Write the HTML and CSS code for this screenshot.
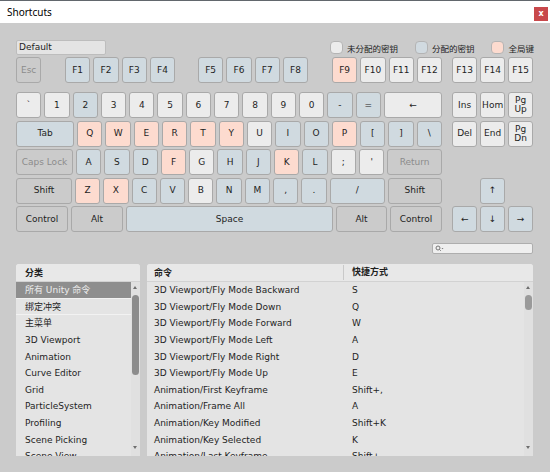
FILE: index.html
```html
<!DOCTYPE html>
<html lang="zh-CN">
<head>
    <meta charset="UTF-8">
    <title>Shortcuts</title>
    <link rel="stylesheet" href="styles.css">
</head>
<body>
<div class="window">
    <div class="titlebar">
        <span class="title">Shortcuts</span>
        <span class="close">x</span>
    </div>

    <div class="content">
        <div class="toolbar">
            <div class="profile">Default</div>
            <div class="legend">
                <span class="swatch"></span><span class="legend-text">未分配的密钥</span>
                <span class="swatch assigned"></span><span class="legend-text">分配的密钥</span>
                <span class="swatch global"></span><span class="legend-text">全局键</span>
            </div>
        </div>

        <!-- function keys -->
        <div class="row row-f">
            <div class="main">
                <div class="key off">Esc</div>
                <div class="key blue g1">F1</div>
                <div class="key blue">F2</div>
                <div class="key blue">F3</div>
                <div class="key blue">F4</div>
                <div class="key blue g2">F5</div>
                <div class="key blue">F6</div>
                <div class="key blue">F7</div>
                <div class="key blue">F8</div>
                <div class="key peach g3">F9</div>
                <div class="key">F10</div>
                <div class="key">F11</div>
                <div class="key">F12</div>
            </div>
            <div class="nav">
                <div class="key">F13</div>
                <div class="key">F14</div>
                <div class="key">F15</div>
            </div>
        </div>

        <div class="row row-first">
            <div class="main">
                <div class="key">`</div>
                <div class="key">1</div>
                <div class="key blue">2</div>
                <div class="key">3</div>
                <div class="key">4</div>
                <div class="key">5</div>
                <div class="key">6</div>
                <div class="key">7</div>
                <div class="key">8</div>
                <div class="key">9</div>
                <div class="key">0</div>
                <div class="key blue">-</div>
                <div class="key blue">=</div>
                <div class="key wide">←</div>
            </div>
            <div class="nav">
                <div class="key">Ins</div>
                <div class="key">Hom</div>
                <div class="key two">Pg<br>Up</div>
            </div>
        </div>

        <div class="row">
            <div class="main">
                <div class="key blue wide">Tab</div>
                <div class="key peach">Q</div>
                <div class="key peach">W</div>
                <div class="key peach">E</div>
                <div class="key peach">R</div>
                <div class="key peach">T</div>
                <div class="key peach">Y</div>
                <div class="key">U</div>
                <div class="key blue">I</div>
                <div class="key blue">O</div>
                <div class="key peach">P</div>
                <div class="key blue">[</div>
                <div class="key blue">]</div>
                <div class="key blue">\</div>
            </div>
            <div class="nav">
                <div class="key">Del</div>
                <div class="key">End</div>
                <div class="key two">Pg<br>Dn</div>
            </div>
        </div>

        <div class="row">
            <div class="main">
                <div class="key off caps">Caps Lock</div>
                <div class="key blue">A</div>
                <div class="key blue">S</div>
                <div class="key blue">D</div>
                <div class="key peach">F</div>
                <div class="key">G</div>
                <div class="key blue">H</div>
                <div class="key blue">J</div>
                <div class="key peach">K</div>
                <div class="key blue">L</div>
                <div class="key">;</div>
                <div class="key">'</div>
                <div class="key off wide">Return</div>
            </div>
            <div class="nav"></div>
        </div>

        <div class="row">
            <div class="main">
                <div class="key mod shift">Shift</div>
                <div class="key peach">Z</div>
                <div class="key peach">X</div>
                <div class="key blue">C</div>
                <div class="key blue">V</div>
                <div class="key">B</div>
                <div class="key blue">N</div>
                <div class="key blue">M</div>
                <div class="key blue">,</div>
                <div class="key blue">.</div>
                <div class="key blue slash">/</div>
                <div class="key mod wide">Shift</div>
            </div>
            <div class="nav">
                <div class="key blank"></div>
                <div class="key blue">↑</div>
            </div>
        </div>

        <div class="row">
            <div class="main">
                <div class="key mod ctrl">Control</div>
                <div class="key mod ctrl">Alt</div>
                <div class="key blue wide">Space</div>
                <div class="key mod alt-r">Alt</div>
                <div class="key mod ctrl">Control</div>
            </div>
            <div class="nav">
                <div class="key blue">←</div>
                <div class="key blue">↓</div>
                <div class="key blue">→</div>
            </div>
        </div>

        <div class="search-row">
            <div class="search">
                <svg width="9" height="7" viewBox="0 0 9 7">
                    <circle cx="3" cy="3" r="2" fill="none" stroke="#777" stroke-width="1"/>
                    <path d="M4.4 4.4 L5.8 5.8" stroke="#777" stroke-width="1"/>
                    <path d="M6.5 3 L8.5 3 L7.5 4.2 Z" fill="#777"/>
                </svg>
            </div>
        </div>

        <div class="lists">
            <div class="panel categories">
                <div class="panel-head">
                    <span class="head-cell">分类</span>
                </div>
                <div class="panel-body">
                    <ul class="cat-list">
                        <li class="selected sep">所有 Unity 命令</li>
                        <li class="sep">绑定冲突</li>
                        <li>主菜单</li>
                        <li>3D Viewport</li>
                        <li>Animation</li>
                        <li>Curve Editor</li>
                        <li>Grid</li>
                        <li>ParticleSystem</li>
                        <li>Profiling</li>
                        <li>Scene Picking</li>
                        <li>Scene View</li>
                    </ul>
                    <div class="scrollbar">
                        <span class="arrow up"></span>
                        <span class="thumb thumb-left"></span>
                        <span class="arrow down"></span>
                    </div>
                </div>
            </div>

            <div class="panel commands">
                <div class="panel-head">
                    <span class="head-cell col-cmd">命令</span>
                    <span class="head-cell col-key">快捷方式</span>
                </div>
                <div class="panel-body">
                    <ul class="cmd-list">
                        <li><span class="col-cmd">3D Viewport/Fly Mode Backward</span><span class="col-key">S</span></li>
                        <li><span class="col-cmd">3D Viewport/Fly Mode Down</span><span class="col-key">Q</span></li>
                        <li><span class="col-cmd">3D Viewport/Fly Mode Forward</span><span class="col-key">W</span></li>
                        <li><span class="col-cmd">3D Viewport/Fly Mode Left</span><span class="col-key">A</span></li>
                        <li><span class="col-cmd">3D Viewport/Fly Mode Right</span><span class="col-key">D</span></li>
                        <li><span class="col-cmd">3D Viewport/Fly Mode Up</span><span class="col-key">E</span></li>
                        <li><span class="col-cmd">Animation/First Keyframe</span><span class="col-key">Shift+,</span></li>
                        <li><span class="col-cmd">Animation/Frame All</span><span class="col-key">A</span></li>
                        <li><span class="col-cmd">Animation/Key Modified</span><span class="col-key">Shift+K</span></li>
                        <li><span class="col-cmd">Animation/Key Selected</span><span class="col-key">K</span></li>
                        <li><span class="col-cmd">Animation/Last Keyframe</span><span class="col-key">Shift+.</span></li>
                    </ul>
                    <div class="scrollbar">
                        <span class="arrow up"></span>
                        <span class="thumb thumb-right"></span>
                        <span class="arrow down"></span>
                    </div>
                </div>
            </div>
        </div>
    </div>
</div>
</body>
</html>
```

FILE: styles.css
```css
body {
    margin: 0;
    font-family: "DejaVu Sans", "Noto Sans CJK SC", sans-serif;
    font-size: 9px;
    color: #1e1e1e;
}
.window {
    width: 550px;
    height: 472px;
    background: #cbcbcb;
    overflow: hidden;
}
.titlebar {
    height: 22px;
    border-top: 1px solid #62676d;
    background: #fff;
    display: flex;
}
.title {
    font-family: "Noto Sans", sans-serif;
    font-size: 10px;
    color: #000;
    padding-left: 7px;
    line-height: 22px;
}
.close {
    margin-left: auto;
    margin-right: 2px;
    margin-top: 6px;
    width: 14px;
    height: 14px;
    background: #c8484b;
    color: #fff;
    font-size: 8px;
    font-weight: bold;
    text-align: center;
    line-height: 13px;
}
.content {
    padding-left: 16px;
    width: 517px;
}
.toolbar {
    display: flex;
    align-items: center;
    margin-top: 17px;
    height: 15px;
}
.profile {
    height: 13px;
    line-height: 13px;
    padding-left: 2px;
    background: #e4e4e4;
    border: 1px solid #bdbdbd;
    border-radius: 2px;
    width: 86px;
}
.legend {
    margin-left: auto;
    margin-right: -1px;
    display: flex;
    align-items: center;
}
.swatch {
    width: 11px;
    height: 11px;
    border: 1px solid #b4b4b4;
    border-radius: 4px;
    background: #ececec;
    margin-right: 4px;
}
.swatch.assigned {
    background: #d1dae0;
    margin-left: 17px;
}
.swatch.global {
    background: #fddbcf;
    margin-left: 17px;
}
.legend-text {
    font-size: 8.5px;
    color: #222;
}

/* keyboard */
.row {
    display: flex;
    margin-top: 2.5px;
    height: 26px;
}
.row-f {
    margin-top: 2px;
}
.row-first {
    margin-top: 9px;
}
.main {
    width: 426px;
    display: flex;
    gap: 3px;
    flex-shrink: 0;
}
.nav {
    margin-left: 10px;
    display: flex;
    gap: 2.7px;
}
.key {
    width: 25.3px;
    height: 26px;
    box-sizing: border-box;
    flex-shrink: 0;
    border: 1px solid #a9a9a9;
    border-radius: 3px;
    background: #ececec;
    display: flex;
    align-items: center;
    justify-content: center;
    text-align: center;
    color: #1e1e1e;
    line-height: 9px;
}
.key.blue {
    background: #d0dae0;
}
.key.peach {
    background: #fddbcf;
}
.key.off {
    background: #cbcbcb;
    color: #8c8c8c;
}
.key.mod {
    background: #cbcbcb;
}
.key.blank {
    visibility: hidden;
}
.key.wide {
    flex: 1;
}
.key.caps {
    width: 57px;
}
.key.shift {
    width: 56px;
}
.key.slash {
    width: 55px;
}
.key.ctrl {
    width: 52px;
}
.key.alt-r {
    width: 51px;
}
.g1 {
    margin-left: 20.7px;
}
.g2 {
    margin-left: 19.8px;
}
.g3 {
    margin-left: 20.8px;
}

/* search + lists */
.search-row {
    display: flex;
    justify-content: flex-end;
    margin-top: 11px;
}
.search {
    width: 97px;
    height: 9px;
    border: 1px solid #aeaeae;
    border-radius: 2px;
    background: #efefef;
    display: flex;
    align-items: center;
    padding-left: 2px;
}
.lists {
    display: flex;
    gap: 7px;
    margin-top: 10px;
    height: 192px;
}
.panel {
    background: #e4e4e4;
    border-radius: 3px 3px 0 0;
    display: flex;
    flex-direction: column;
    overflow: hidden;
}
.categories {
    width: 124px;
}
.commands {
    flex: 1;
}
.panel-head {
    height: 17px;
    border-bottom: 1px solid #d2d2d2;
    background: #e8e8e8;
    display: flex;
    align-items: center;
    flex-shrink: 0;
}
.head-cell {
    font-weight: bold;
    padding-left: 9px;
}
.commands .head-cell {
    padding-left: 7px;
}
.commands .head-cell.col-key {
    border-left: 1px solid #c9c9c9;
    padding-left: 8px;
    height: 15px;
    line-height: 15px;
}
.commands .head-cell.col-cmd {
    width: 189px;
}
.panel-body {
    flex: 1;
    display: flex;
    overflow: hidden;
}
.cat-list, .cmd-list {
    list-style-type: none;
    margin: 0;
    padding: 0;
    flex: 1;
}
.cat-list li, .cmd-list li {
    height: 16.65px;
    line-height: 16.65px;
    box-sizing: border-box;
    white-space: nowrap;
}
.cat-list li {
    padding-left: 9px;
}
.cat-list li.sep {
    border-bottom: 1px solid #f2f2f2;
}
.cat-list li.selected {
    background: #8e8e8e;
    color: #ececec;
}
.cmd-list li {
    display: flex;
}
.cmd-list .col-cmd {
    width: 198px;
    padding-left: 7px;
}
.scrollbar {
    width: 9px;
    background: #e0e0e0;
    position: relative;
    flex-shrink: 0;
}
.thumb {
    position: absolute;
    left: 1px;
    width: 7px;
    background: #8c8c8c;
    border-radius: 4px;
}
.thumb-left {
    top: 13px;
    height: 80px;
}
.thumb-right {
    top: 13px;
    height: 15px;
    background: #9a9a9a;
}
.arrow {
    position: absolute;
    left: 2px;
    width: 0;
    height: 0;
    border-left: 2.5px solid transparent;
    border-right: 2.5px solid transparent;
}
.arrow.up {
    top: 4px;
    border-bottom: 3px solid #6e6e6e;
}
.arrow.down {
    top: 164px;
    border-top: 3px solid #6e6e6e;
}
```
